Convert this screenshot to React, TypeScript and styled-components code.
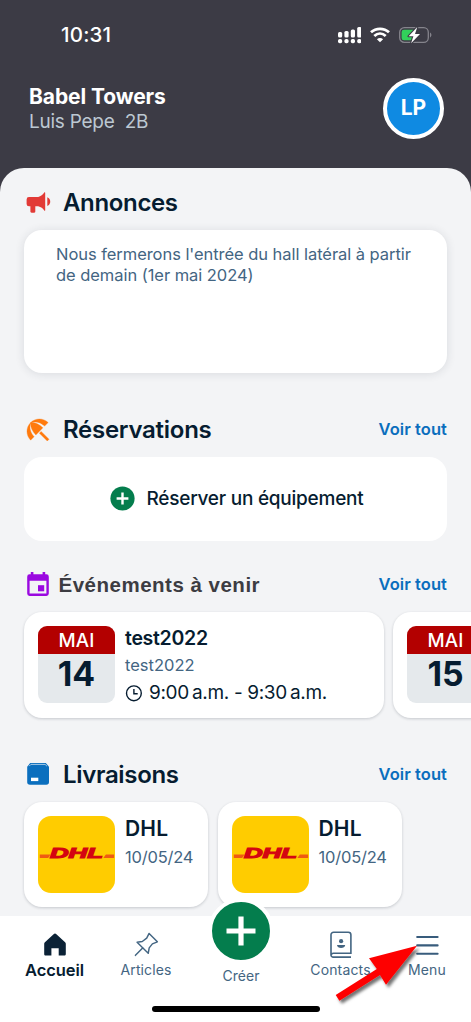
import React from 'react';
import styled, { createGlobalStyle } from 'styled-components';

const GlobalStyle = createGlobalStyle`
  * { box-sizing: border-box; }
  html, body { margin: 0; padding: 0; }
  body { font-family: Inter, "Liberation Sans", sans-serif; background: #3c3b45; color: #061c30; }
  svg { display: block; flex: none; }
`;

const Screen = styled.div`
  position: relative;
  display: flex;
  flex-direction: column;
  width: 471px;
  height: 1022px;
  overflow: hidden;
  background: #3c3b45;
`;

const Label = styled.span<{ $size: number; $weight?: number; $color?: string; $track?: number; $line?: number }>`
  display: block;
  white-space: pre;
  font-size: ${(p) => p.$size}px;
  font-weight: ${(p) => p.$weight ?? 400};
  color: ${(p) => p.$color ?? '#061c30'};
  letter-spacing: ${(p) => p.$track ?? 0}px;
  line-height: ${(p) => p.$line ?? 24}px;
`;

const StatusBar = styled.div`
  display: flex;
  align-items: center;
  justify-content: space-between;
  height: 70px;
  padding: 0 39px 0 61px;
`;

const StatusIcons = styled.div`
  display: flex;
  align-items: center;
  gap: 9px;
`;

const Header = styled.header`
  display: flex;
  justify-content: space-between;
  height: 98px;
  padding: 7.5px 27px 0 29px;
`;

const HeaderText = styled.div`
  padding-top: 7.5px;
`;

const Avatar = styled.div`
  display: flex;
  align-items: center;
  justify-content: center;
  width: 61px;
  height: 61px;
  border: 4px solid #fff;
  border-radius: 50%;
  background: #0f8ae2;
`;

const Sheet = styled.main`
  flex: none;
  height: 748px;
  padding: 15px 0 0 24px;
  background: #f3f4f6;
  border-radius: 24px 24px 0 0;
  overflow: hidden;
`;

const Section = styled.section<{ $height: number }>`
  height: ${(p) => p.$height}px;
`;

const SectionHead = styled.div<{ $gap?: number }>`
  display: flex;
  align-items: center;
  gap: ${(p) => p.$gap ?? 11}px;
  height: 40px;
  margin-bottom: 7px;
  padding: 0 24px 0 2px;
`;

const EventsTitle = styled.h2`
  margin: 0;
  padding-bottom: 1px;
  font: 700 20.5px/26px "Liberation Sans", sans-serif;
  letter-spacing: 0.5px;
  color: #3c3c42;
  white-space: nowrap;
`;

const SeeAll = styled.a`
  margin-left: auto;
  padding-bottom: 2px;
  font-size: 16.5px;
  font-weight: 600;
  line-height: 24px;
  letter-spacing: 0.08px;
  color: #0a6ebd;
  white-space: nowrap;
`;

const Notice = styled.div`
  width: 423px;
  height: 143px;
  padding: 14px 32px;
  background: #fff;
  border-radius: 18px;
  box-shadow: 0 1px 10px rgba(30, 40, 60, 0.12);
`;

const Booking = styled.div`
  display: flex;
  align-items: center;
  justify-content: center;
  gap: 12px;
  width: 423px;
  height: 83.5px;
  padding-left: 2px;
  background: #fff;
  border-radius: 18px;
`;

const Row = styled.div`
  display: flex;
  gap: 9.5px;
`;

const Card = styled.article<{ $width: number }>`
  display: flex;
  flex: none;
  gap: 10px;
  width: ${(p) => p.$width}px;
  height: 105.5px;
  padding: 14px;
  background: #fff;
  border-radius: 18px;
  box-shadow: 0 1px 3px rgba(20, 30, 45, 0.2);
`;

const DateTile = styled.div`
  flex: none;
  width: 77px;
  height: 77px;
  overflow: hidden;
  border-radius: 9px;
  background: #e5e9ec;
  text-align: center;
`;

const Month = styled.div`
  height: 28px;
  padding-top: 1px;
  background: #b30000;
`;

const CardText = styled.div``;

const TimeLine = styled.div`
  display: flex;
  align-items: center;
  gap: 7px;
  padding-top: 1px;
`;

const BrandTile = styled.div`
  display: flex;
  align-items: center;
  flex: none;
  width: 77px;
  height: 77px;
  border-radius: 13px;
  background: #ffcc00;
`;

const Nav = styled.nav`
  position: relative;
  display: grid;
  grid-template-columns: 91px 92px 98px 101px 72px;
  height: 84px;
  padding-left: 9px;
  background: #fff;
`;

const NavItem = styled.div<{ $top?: number }>`
  display: flex;
  flex-direction: column;
  align-items: center;
  padding-top: ${(p) => p.$top ?? 13}px;
`;

const IconSlot = styled.div`
  display: flex;
  align-items: center;
  justify-content: center;
  height: 31px;
`;

const Fab = styled.div`
  position: absolute;
  left: 208px;
  top: -18px;
  display: flex;
  align-items: center;
  justify-content: center;
  width: 66px;
  height: 66px;
  border: 4px solid #fff;
  border-radius: 50%;
  background: #047d4d;
`;

const HomeArea = styled.div`
  display: flex;
  flex: 1;
  justify-content: center;
  padding-top: 6px;
  background: #fff;
`;

const HomeBar = styled.div`
  width: 168px;
  height: 6px;
  border-radius: 3px;
  background: #000;
`;

const Pointer = styled.svg`
  position: absolute;
  left: 325px;
  top: 930px;
`;

const Signal = () => (
  <svg width="23.4" height="17" viewBox="0 0 23.4 17" fill="#fff">
    {[5, 4, 2.5, 0].map((top, i) => (
      <g key={i}>
        <rect x={i * 6.4} y={top} width="4.2" height={10.5 - top} rx="1.5" />
        <rect x={i * 6.4} y="12" width="4.2" height="4.2" rx="1.7" />
      </g>
    ))}
  </svg>
);

const Wifi = () => (
  <svg width="20" height="16" viewBox="0 0 20 16" fill="none" stroke="#fff" strokeWidth="2.8">
    <path d="M1 5.3C6 .6 14 .6 19 5.3" />
    <path d="M4.3 9C7.7 5.8 12.3 5.8 15.7 9" />
    <path d="M10 15.3 6.9 12.2C8.7 10.6 11.3 10.6 13.1 12.2Z" fill="#fff" stroke="none" />
  </svg>
);

const Battery = () => (
  <svg width="33" height="18" viewBox="0 0 33 18">
    <rect x=".7" y="1.7" width="28.6" height="14.6" rx="4.6" fill="none" stroke="#85848c" strokeWidth="1.3" />
    <path d="M31 6.6c1.9.7 1.9 4.1 0 4.8Z" fill="#85848c" />
    <path d="M5 3.7h9.5v10.6H5a2.4 2.4 0 0 1-2.4-2.4V6.1A2.4 2.4 0 0 1 5 3.7Z" fill="#32d15b" />
    <path d="M18.3 1 9.6 10.2h4.8L12.1 17.3 21 7.9h-5Z" fill="#fff" stroke="#3c3b45" strokeWidth="2.2" paintOrder="stroke" strokeLinejoin="round" />
  </svg>
);

const Megaphone = () => (
  <svg width="26" height="22" viewBox="0 0 26 22" fill="#e23a36">
    <path d="M3 5h9.2C14.8 4.6 17 2.6 18.2.6c.4-.5 1-.3 1 .3v17.3c0 .6-.6.8-1 .3C17 16.5 15 14.9 12.2 14.3H9.3v5.2c0 .8-.5 1.2-1.2 1.2H5.6c-.8 0-1.2-.5-1.2-1.2v-5.2H3a2.4 2.4 0 0 1-2.4-2.4V7.4A2.4 2.4 0 0 1 3 5Z" />
    <path d="M21.3 5.3c3.9 1.2 3.9 7.4 0 8.7Z" />
  </svg>
);

const Umbrella = () => (
  <svg width="24" height="24" viewBox="2.2 2.2 19.6 19.6" fill="#ff7a0d" stroke="#ff7a0d" strokeWidth=".25">
    <path d="M13.127 14.56l1.43-1.43 6.44 6.443L19.57 21zM17.42 8.83l2.86-2.86c-3.95-3.95-10.35-3.96-14.3-.02 3.93-1.3 8.31-.25 11.44 2.88zM5.95 5.98c-3.94 3.95-3.93 10.35.02 14.3l2.86-2.86C5.7 14.29 4.65 9.91 5.95 5.98zm.02-.02l-.01.01c-.38 3.01 1.17 6.88 4.3 10.02l5.73-5.73c-3.13-3.13-7.01-4.68-10.02-4.3z" />
  </svg>
);

const CalendarIcon = () => (
  <svg width="24" height="26" viewBox="0 0 24 26" fill="#9a08e0">
    <path fillRule="evenodd" d="M4.8 0h2.6v2.3h9.2V0h2.6v2.3H20.4A2.4 2.4 0 0 1 22.8 4.7v16.9a2.4 2.4 0 0 1-2.4 2.4H3.6a2.4 2.4 0 0 1-2.4-2.4V4.7a2.4 2.4 0 0 1 2.4-2.4h1.2ZM3.6 8.7v12.9h16.8V8.7Z" />
    <rect x="12" y="13.2" width="6.2" height="6.1" />
  </svg>
);

const Parcel = () => (
  <svg width="24" height="23" viewBox="0 0 24 23">
    <path d="M4.2 0h15.6l3.2 3.7V19a2.8 2.8 0 0 1-2.8 2.8H4A2.8 2.8 0 0 1 1.2 19V3.7Z" fill="#0b6fbe" />
    <path d="M3.2 3.1 4.9 1.4H19.1L20.9 3.1" fill="none" stroke="#b9d5eb" strokeWidth=".9" />
    <rect x="5" y="14.7" width="7.3" height="3.4" fill="#fff" />
  </svg>
);

const PlusBadge = () => (
  <svg width="25" height="25" viewBox="0 0 25 25">
    <circle cx="12.5" cy="12.5" r="12.1" fill="#047d4d" />
    <path d="M12.5 6.6v11.8M6.6 12.5h11.8" stroke="#fff" strokeWidth="2.4" />
  </svg>
);

const Clock = () => (
  <svg width="17" height="17" viewBox="0 0 17 17" fill="none" stroke="#061c30" strokeWidth="1.4">
    <circle cx="8.9" cy="8.3" r="7.4" />
    <path d="M8.9 4.1v4.6h3.8" />
  </svg>
);

const DhlLogo = () => (
  <svg width="77" height="26" viewBox="0 0 77 26">
    <path d="M1.8 13.4h10.6L10.2 17H1.8ZM67.9 13.4h8.2V17H65.3Z" fill="#ef5a12" />
    <text x="12" y="16.6" textLength="53" lengthAdjust="spacingAndGlyphs" fontFamily="Liberation Sans" fontSize="14" fontWeight="700" fontStyle="italic" fill="#d40511" stroke="#d40511" strokeWidth="1.1">DHL</text>
  </svg>
);

const Home = () => (
  <svg width="24" height="24" viewBox="0 0 24 24">
    <path d="M10.6 1.3a2 2 0 0 1 2.8 0l8.7 7.9c.5.5.7 1 .7 1.6v10.1c0 1-.7 1.6-1.6 1.6h-5.5v-7.3H8.4v7.3H2.8c-1 0-1.6-.7-1.6-1.6V10.8c0-.6.2-1.1.7-1.6Z" fill="#0b2236" />
  </svg>
);

const Pin = () => (
  <svg width="25" height="25" viewBox="0 0 26 26" fill="none" stroke="#436582" strokeWidth="1.5" strokeLinejoin="round" strokeLinecap="round">
    <path d="M15.7 1.5 24.3 10.2 19.1 12.3 15.8 16.5 14.8 22.2 3.2 10.7 8.6 9.9 13.2 6.4Z" />
    <path d="m9 16.6-7.5 7.7" />
  </svg>
);

const ContactBook = () => (
  <svg width="24" height="28" viewBox="0 0 24 28" fill="none" stroke="#436582" strokeWidth="1.6">
    <path d="M22 26.1H4.3A2.2 2.2 0 0 1 2 23.9V3.8A2.6 2.6 0 0 1 4.6 1.2h14.7A2.6 2.6 0 0 1 21.9 3.8v18.5H4.3a2 2 0 0 0-2 1.7" />
    <circle cx="12.1" cy="10.2" r="2.1" fill="#436582" stroke="none" />
    <path d="M8 14h8.2c0 4-8.2 4-8.2 0Z" fill="#436582" stroke="none" />
  </svg>
);

const MenuIcon = () => (
  <svg width="24" height="22" viewBox="0 0 24 22" stroke="#385c7c" strokeWidth="2.1" strokeLinecap="round">
    <path d="M2.2 3h20.4M2.2 11.4h20.4M2.2 19.7h20.4" />
  </svg>
);

const slate = '#436582';

const DateCard = ({ day, children }: { day: string; children?: React.ReactNode }) => (
  <Card $width={359.5}>
    <DateTile>
      <Month>
        <Label $size={18.8} $weight={500} $color="#fff" $line={28} $track={0.2}>MAI</Label>
      </Month>
      <Label $size={33.8} $weight={700} $line={40}>{day}</Label>
    </DateTile>
    {children}
  </Card>
);

const Delivery = () => (
  <Card $width={184}>
    <BrandTile><DhlLogo /></BrandTile>
    <CardText>
      <Label $size={21} $weight={600} $line={26} $track={0.2}>DHL</Label>
      <Label $size={16.5} $color={slate} $line={30} $track={-0.2}>10/05/24</Label>
    </CardText>
  </Card>
);

export default function App() {
  return (
    <Screen>
      <GlobalStyle />
      <StatusBar>
        <Label $size={20.5} $weight={500} $color="#fff" $track={0.2}>10:31</Label>
        <StatusIcons><Signal /><Wifi /><Battery /></StatusIcons>
      </StatusBar>
      <Header>
        <HeaderText>
          <Label $size={21} $weight={700} $color="#fff" $track={-0.1}>Babel Towers</Label>
          <Label $size={19} $color="#bcc8d2" $line={25} $track={-0.25}>{'Luis Pepe  2B'}</Label>
        </HeaderText>
        <Avatar><Label $size={21} $weight={700} $color="#fff">LP</Label></Avatar>
      </Header>
      <Sheet>
        <Section $height={227}>
          <SectionHead>
            <Megaphone />
            <Label $size={24} $weight={600} $track={-0.35}>Annonces</Label>
          </SectionHead>
          <Notice>
            <Label $size={16.5} $color={slate} $line={20.5} $track={-0.05}>{"Nous fermerons l'entrée du hall latéral à partir\nde demain (1er mai 2024)"}</Label>
          </Notice>
        </Section>
        <Section $height={155}>
          <SectionHead $gap={13}>
            <Umbrella />
            <Label $size={24} $weight={600} $track={-0.27}>Réservations</Label>
            <SeeAll>Voir tout</SeeAll>
          </SectionHead>
          <Booking>
            <PlusBadge />
            <Label $size={19} $weight={500} $track={-0.24}>Réserver un équipement</Label>
          </Booking>
        </Section>
        <Section $height={189.5}>
          <SectionHead $gap={8.5}>
            <CalendarIcon />
            <EventsTitle>Événements à venir</EventsTitle>
            <SeeAll>Voir tout</SeeAll>
          </SectionHead>
          <Row>
            <DateCard day="14">
              <CardText>
                <Label $size={19.5} $weight={600} $line={24} $track={-0.3}>test2022</Label>
                <Label $size={16.5} $color={slate} $line={30}>test2022</Label>
                <TimeLine>
                  <Clock />
                  <Label $size={19} $line={24} $track={-0.34}>{'9:00\u2009a.m. - 9:30\u2009a.m.'}</Label>
                </TimeLine>
              </CardText>
            </DateCard>
            <DateCard day="15" />
          </Row>
        </Section>
        <Section $height={170}>
          <SectionHead $gap={13}>
            <Parcel />
            <Label $size={24} $weight={600} $track={-0.33}>Livraisons</Label>
            <SeeAll>Voir tout</SeeAll>
          </SectionHead>
          <Row><Delivery /><Delivery /></Row>
        </Section>
      </Sheet>
      <Nav>
        <NavItem>
          <IconSlot><Home /></IconSlot>
          <Label $size={16.5} $weight={600} $line={20} $track={-0.1}>Accueil</Label>
        </NavItem>
        <NavItem>
          <IconSlot><Pin /></IconSlot>
          <Label $size={14} $color={slate} $line={20} $track={0.1}>Articles</Label>
        </NavItem>
        <NavItem $top={50}>
          <Label $size={14} $color={slate} $line={20}>Créer</Label>
        </NavItem>
        <NavItem>
          <IconSlot><ContactBook /></IconSlot>
          <Label $size={14} $color={slate} $line={20} $track={0.15}>Contacts</Label>
        </NavItem>
        <NavItem>
          <IconSlot><MenuIcon /></IconSlot>
          <Label $size={14} $color={slate} $line={20} $track={0.1}>Menu</Label>
        </NavItem>
        <Fab>
          <svg width="30" height="30" viewBox="0 0 30 30" stroke="#fff" strokeWidth="5.2">
            <path d="M15 .5v29M.5 15h29" />
          </svg>
        </Fab>
      </Nav>
      <HomeArea><HomeBar /></HomeArea>
      <Pointer width="110" height="85" viewBox="325 930 110 85">
        <defs>
          <filter id="pointer-shadow" x="-20%" y="-20%" width="150%" height="150%">
            <feDropShadow dx="2.5" dy="3" stdDeviation="1.8" floodColor="#000" floodOpacity=".55" />
          </filter>
        </defs>
        <path d="M417 945.7 369 958.3 376.8 969 335.7 995 339.4 1000.8 380 975 386 984.7Z" fill="#fe0000" filter="url(#pointer-shadow)" />
      </Pointer>
    </Screen>
  );
}
